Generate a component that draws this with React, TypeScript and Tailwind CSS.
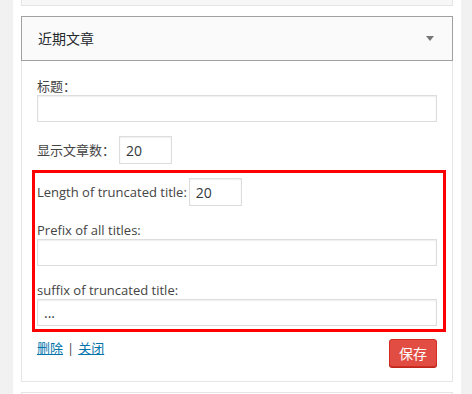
import React from "react";

const font = { fontFamily: '"Open Sans", "Noto Sans CJK SC", sans-serif' };

function Field({ value, className = "" }: { value?: string; className?: string }) {
  return (
    <div
      className={
        "h-[27px] border border-[#dddddd] bg-white shadow-[inset_0_1px_2px_rgba(0,0,0,0.07)] flex items-center px-[6px] text-[14px] text-[#32373c] " +
        className
      }
    >
      {value}
    </div>
  );
}

export default function App() {
  return (
    <div
      className="w-[472px] h-[394px] bg-[#f1f1f1] overflow-hidden text-[13px] text-[#444444]"
      style={font}
    >
      <div className="ml-[13px] w-[448px] h-full bg-white px-[8px]">
        {/* previous widget, mostly scrolled away */}
        <div className="h-[6px] bg-[#f7f7f7] border-x border-b border-[#e5e5e5]" />

        <div className="mt-[10px]">
          <div className="h-[45px] bg-[#fafafa] border border-[#a0a0a0] flex items-center justify-between pl-[16px] pr-[18px]">
            <span className="text-[14px] text-[#23282d]">近期文章</span>
            <span className="w-0 h-0 border-x-[4px] border-x-transparent border-t-[5px] border-t-[#777777]" />
          </div>

          <div className="border-x border-b border-[#e5e5e5] pl-[15px] pr-[15px] pt-[16px] pb-[14px]">
            <div className="leading-[18px]">标题：</div>
            <Field />

            <div className="mt-[14px] flex items-center h-[28px]">
              <span className="leading-[18px]">显示文章数：</span>
              <Field value="20" className="ml-[4px] w-[53px] h-[28px]" />
            </div>

            <div className="mt-[6px] -ml-[5px] -mr-[9px] border-[3px] border-[#ff0000] pl-[2px] pr-[6px] pt-[5px] pb-[3px]">
              <div className="flex items-center h-[28px]">
                <span className="leading-[18px]">Length of truncated title:</span>
                <Field value="20" className="ml-[2px] w-[53px] h-[28px]" />
              </div>
              <div className="mt-[15px] leading-[18px]">Prefix of all titles:</div>
              <Field />
              <div className="mt-[15px] leading-[18px]">suffix of truncated title:</div>
              <Field value="..." />
            </div>

            <div className="mt-[7px] flex items-start justify-between">
              <div className="leading-[18px] text-[13px]">
                <a className="text-[#0073aa] underline">删除</a>
                <span className="mx-[4px] text-[#444444]">|</span>
                <a className="text-[#0073aa] underline">关闭</a>
              </div>
              <button className="w-[48px] h-[28px] rounded-[3px] bg-[#e14d43] border border-[#d02c21] shadow-[0_1px_0_#ba281e] text-white text-[14px]">
                保存
              </button>
            </div>
          </div>
        </div>

        <div className="mt-[10px] h-[10px] border-t border-x border-[#e5e5e5]" />
      </div>
    </div>
  );
}
